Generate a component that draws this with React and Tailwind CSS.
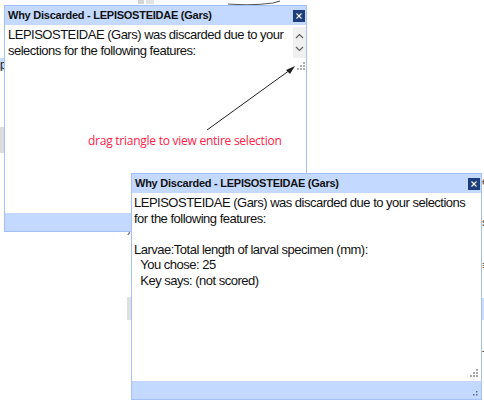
import React from "react";

function Chevron({ up }) {
  return (
    <svg width="9" height="6" viewBox="0 0 9 6">
      <path d={up ? "M1 5 L4.5 1.5 L8 5" : "M1 1 L4.5 4.5 L8 1"} fill="none" stroke="#606060" strokeWidth="1.2" />
    </svg>
  );
}

function Grip({ color = "#b0b0b0" }) {
  const pts = [
    [6, 0],
    [3, 3], [6, 3],
    [0, 6], [3, 6], [6, 6],
  ];
  return (
    <svg width="8" height="8" viewBox="0 0 8 8">
      {pts.map(([x, y], i) => (
        <rect key={i} x={x} y={y} width="2" height="2" fill={color} />
      ))}
    </svg>
  );
}

function CloseBtn() {
  return (
    <div className="w-[12px] h-[12px] bg-[#1e3d7d] flex items-center justify-center">
      <svg width="6" height="6" viewBox="0 0 6 6">
        <path d="M0.5 0.5 L5.5 5.5 M5.5 0.5 L0.5 5.5" stroke="#ffffff" strokeWidth="1.1" />
      </svg>
    </div>
  );
}

function TitleBar() {
  return (
    <div className="h-[19px] shrink-0 flex items-center justify-between bg-[#c3d9ff] pl-[3px] pr-[1px]">
      <span className="text-[11px] font-bold text-[#111] leading-none tracking-[-0.25px]">Why Discarded - LEPISOSTEIDAE (Gars)</span>
      <CloseBtn />
    </div>
  );
}

export default function App() {
  return (
    <div className="relative w-[484px] h-[400px] bg-white overflow-hidden font-['Liberation_Sans',Arial,sans-serif]">
      {/* background fragments */}
      <div className="absolute left-[138px] top-0 w-[6px] h-[4px] bg-[#d4d4d4]" />
      <div className="absolute left-[146px] top-0 w-[8px] h-[4px] bg-[#e2e2e2]" />
      <svg className="absolute left-[228px] top-0" width="60" height="6" viewBox="0 0 60 6">
        <path d="M0 4 Q25 6 45 3 L52 1" fill="none" stroke="#555" strokeWidth="1.2" />
      </svg>
      <div className="absolute left-0 top-[58px] w-[4px] h-[12px] bg-[#c9dcfb]" />
      <div className="absolute left-0 top-[59px] w-[4px] overflow-hidden text-[12px] leading-none text-[#222]">p</div>
      <div className="absolute left-0 top-[127px] w-[4px] h-[26px] bg-[#dcdcdc]" />
      <div className="absolute left-[127px] top-[297px] w-[4px] h-[23px] bg-[#e0e0e0]" />
      <div className="absolute left-[127px] top-[228px] text-[10px] leading-none text-[#333]">›</div>
      <div className="absolute left-[482px] top-[176px] w-[2px] overflow-hidden text-[11px] leading-none text-[#333]">e</div>
      <div className="absolute left-[482px] top-[217px] w-[2px] overflow-hidden text-[11px] leading-none text-[#333]">s</div>
      <div className="absolute left-[482px] top-[260px] w-[2px] overflow-hidden text-[11px] leading-none text-[#333]">≡</div>
      <div className="absolute left-[482px] top-[298px] w-[2px] h-[22px] bg-[#c9dcfb]" />
      <div className="absolute left-[482px] top-[350px] w-[2px] overflow-hidden text-[11px] leading-none text-[#333]">T</div>

      {/* Dialog 1 */}
      <div className="absolute left-[4px] top-[5px] w-[303px] h-[227px] flex flex-col border border-[#a3c1f6] bg-white">
        <TitleBar />
        <div className="flex-1 flex flex-col">
          <div className="flex h-[46px] pl-[3px] pt-[2px]">
            <div className="flex-1 text-[13px] leading-[15.5px] tracking-[-0.5px] text-[#111]">
              LEPISOSTEIDAE (Gars) was discarded due to your selections for the following features:
            </div>
            <div className="w-[13px] flex flex-col">
              <div className="h-[31px] bg-[#f0f0f0] flex flex-col items-center justify-around py-[2px]">
                <Chevron up />
                <Chevron />
              </div>
              <div className="flex-1 flex items-end justify-end pr-[1px] pb-[1px]">
                <Grip />
              </div>
            </div>
          </div>
        </div>
        <div className="h-[18px] shrink-0 bg-[#c3d9ff]" />
      </div>

      {/* annotation */}
      <svg className="absolute left-0 top-0" width="484" height="400" viewBox="0 0 484 400">
        <line x1="207" y1="130" x2="290" y2="70" stroke="#222" strokeWidth="1" />
        <path d="M295 66 L286 70 L290 74 Z" fill="#222" />
      </svg>
      <div className="absolute left-[88px] top-[135px] font-['Open_Sans',sans-serif] text-[12px] leading-none tracking-[-0.25px] text-[#ff2048]">
        drag triangle to view entire selection
      </div>

      {/* Dialog 2 */}
      <div className="absolute left-[131px] top-[173px] w-[351px] h-[227px] flex flex-col border border-[#a3c1f6] bg-white">
        <TitleBar />
        <div className="flex-1 flex flex-col pl-[2px] pt-[2px]">
          <div className="flex-1 text-[13px] leading-[15.5px] tracking-[-0.5px] text-[#111] whitespace-pre-wrap">
            {"LEPISOSTEIDAE (Gars) was discarded due to your selections for the following features:\n\nLarvae:Total length of larval specimen (mm):\n  You chose: 25\n  Key says: (not scored)"}
          </div>
          <div className="flex justify-end pr-[3px] pb-[4px]">
            <Grip color="#a8a8a8" />
          </div>
        </div>
        <div className="h-[18px] shrink-0 bg-[#c3d9ff] flex items-end justify-end pr-[3px] pb-[3px]">
          <svg width="5" height="5" viewBox="0 0 5 5">
            <rect x="3" y="0" width="1.5" height="1.5" fill="#5a6a8a" />
            <rect x="0" y="3" width="1.5" height="1.5" fill="#5a6a8a" />
            <rect x="3" y="3" width="1.5" height="1.5" fill="#5a6a8a" />
          </svg>
        </div>
      </div>
    </div>
  );
}
